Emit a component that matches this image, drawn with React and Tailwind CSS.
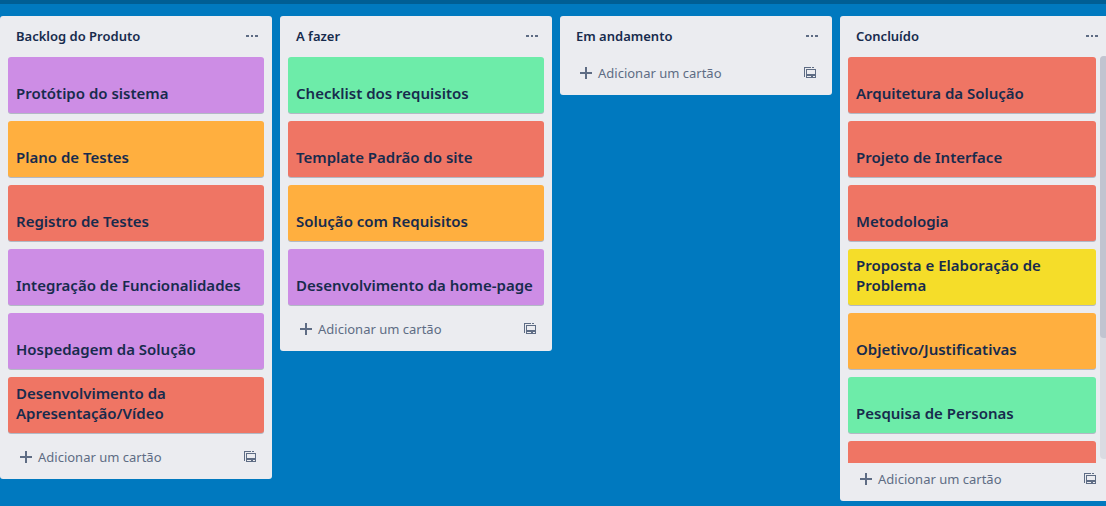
const COLORS = {
  purple: 'bg-[#cd8de5]',
  orange: 'bg-[#ffaf3f]',
  red: 'bg-[#ef7564]',
  green: 'bg-[#6deca9]',
  yellow: 'bg-[#f5dd29]',
};

const LISTS = [
  {
    title: 'Backlog do Produto',
    cards: [
      { text: 'Protótipo do sistema', color: 'purple' },
      { text: 'Plano de Testes', color: 'orange' },
      { text: 'Registro de Testes', color: 'red' },
      { text: 'Integração de Funcionalidades', color: 'purple' },
      { text: 'Hospedagem da Solução', color: 'purple' },
      { text: 'Desenvolvimento da Apresentação/Vídeo', color: 'red' },
    ],
  },
  {
    title: 'A fazer',
    cards: [
      { text: 'Checklist dos requisitos', color: 'green' },
      { text: 'Template Padrão do site', color: 'red' },
      { text: 'Solução com Requisitos', color: 'orange' },
      { text: 'Desenvolvimento da home-page', color: 'purple' },
    ],
  },
  { title: 'Em andamento', cards: [] },
  {
    title: 'Concluído',
    scrolls: true,
    cards: [
      { text: 'Arquitetura da Solução', color: 'red' },
      { text: 'Projeto de Interface', color: 'red' },
      { text: 'Metodologia', color: 'red' },
      { text: 'Proposta e Elaboração de Problema', color: 'yellow' },
      { text: 'Objetivo/Justificativas', color: 'orange' },
      { text: 'Pesquisa de Personas', color: 'green' },
      { text: '', color: 'red' },
    ],
  },
];

function DotsIcon() {
  return (
    <svg width="12" height="2" viewBox="0 0 12 2" fill="currentColor" shapeRendering="crispEdges" aria-hidden="true">
      <path d="M0 0h3v2H0zM5 0h2v2H5zM9 0h3v2H9z" />
    </svg>
  );
}

function PlusIcon() {
  return (
    <svg width="12" height="12" viewBox="0 0 12 12" fill="currentColor" shapeRendering="crispEdges" aria-hidden="true">
      <path d="M5 0h2v5h5v2H7v5H5V7H0V5h5z" />
    </svg>
  );
}

function TemplateIcon() {
  return (
    <svg width="12" height="12" viewBox="0 0 12 12" fill="currentColor" shapeRendering="crispEdges" aria-hidden="true">
      <path d="M0 0h7v1H1v9H0zM8 0h2v1H8z" />
      <path fillRule="evenodd" d="M2 2h10v9H2zM3 3v4h8V3zM3 9v1h4V9zM9 9v1h2V9z" />
    </svg>
  );
}

function Card({ card }) {
  return (
    <li>
      <a
        href="#"
        className={`flex h-14 items-end rounded-[3px] px-2 pb-[10px] shadow-[0_1px_0_#091e4240] ${COLORS[card.color]}`}
      >
        <span className="text-[15px] leading-5 font-semibold">{card.text}</span>
      </a>
    </li>
  );
}

function List({ list }) {
  return (
    <section className="flex max-h-full w-[272px] shrink-0 flex-col rounded-[3px] bg-[#ebecf0]">
      <header className="mb-px flex h-10 shrink-0 items-center justify-between pr-[14px] pl-4">
        <h2 className="text-[13px] leading-5 font-semibold">{list.title}</h2>
        <button type="button" aria-label="Ações da lista" className="text-[#5e6c84]">
          <DotsIcon />
        </button>
      </header>
      <div className="relative flex min-h-0 flex-col">
        <ul className={`flex min-h-0 flex-col gap-2 overflow-hidden pl-2 ${list.scrolls ? 'pr-4' : 'pr-2'} ${list.cards.length && !list.scrolls ? 'pb-2' : ''}`}>
          {list.cards.map((card, i) => (
            <Card key={i} card={card} />
          ))}
        </ul>
        {list.scrolls && (
          <div className="absolute -top-px right-1 bottom-1 w-2 rounded bg-[#dadbe2]">
            <div className="h-[70%] rounded bg-[#c1c4d0]" />
          </div>
        )}
      </div>
      <footer className="flex shrink-0 items-center justify-between px-4 pt-[2px] pb-2 text-[#5e6c84]">
        <button type="button" className="flex h-7 items-center gap-[6px] pl-1 text-[13px] leading-5">
          <PlusIcon />
          Adicionar um cartão
        </button>
        <button type="button" aria-label="Criar a partir de modelo">
          <TemplateIcon />
        </button>
      </footer>
    </section>
  );
}

export default function App() {
  return (
    <div className="flex h-screen flex-col overflow-hidden bg-[#0079bf] font-['Noto_Sans',sans-serif] text-[#172b4d]">
      <div className="h-1 shrink-0 bg-[#005e94]" />
      <main className="flex min-h-0 flex-1 items-start gap-2 overflow-hidden pt-3 pb-[5px]">
        {LISTS.map((list) => (
          <List key={list.title} list={list} />
        ))}
      </main>
    </div>
  );
}
